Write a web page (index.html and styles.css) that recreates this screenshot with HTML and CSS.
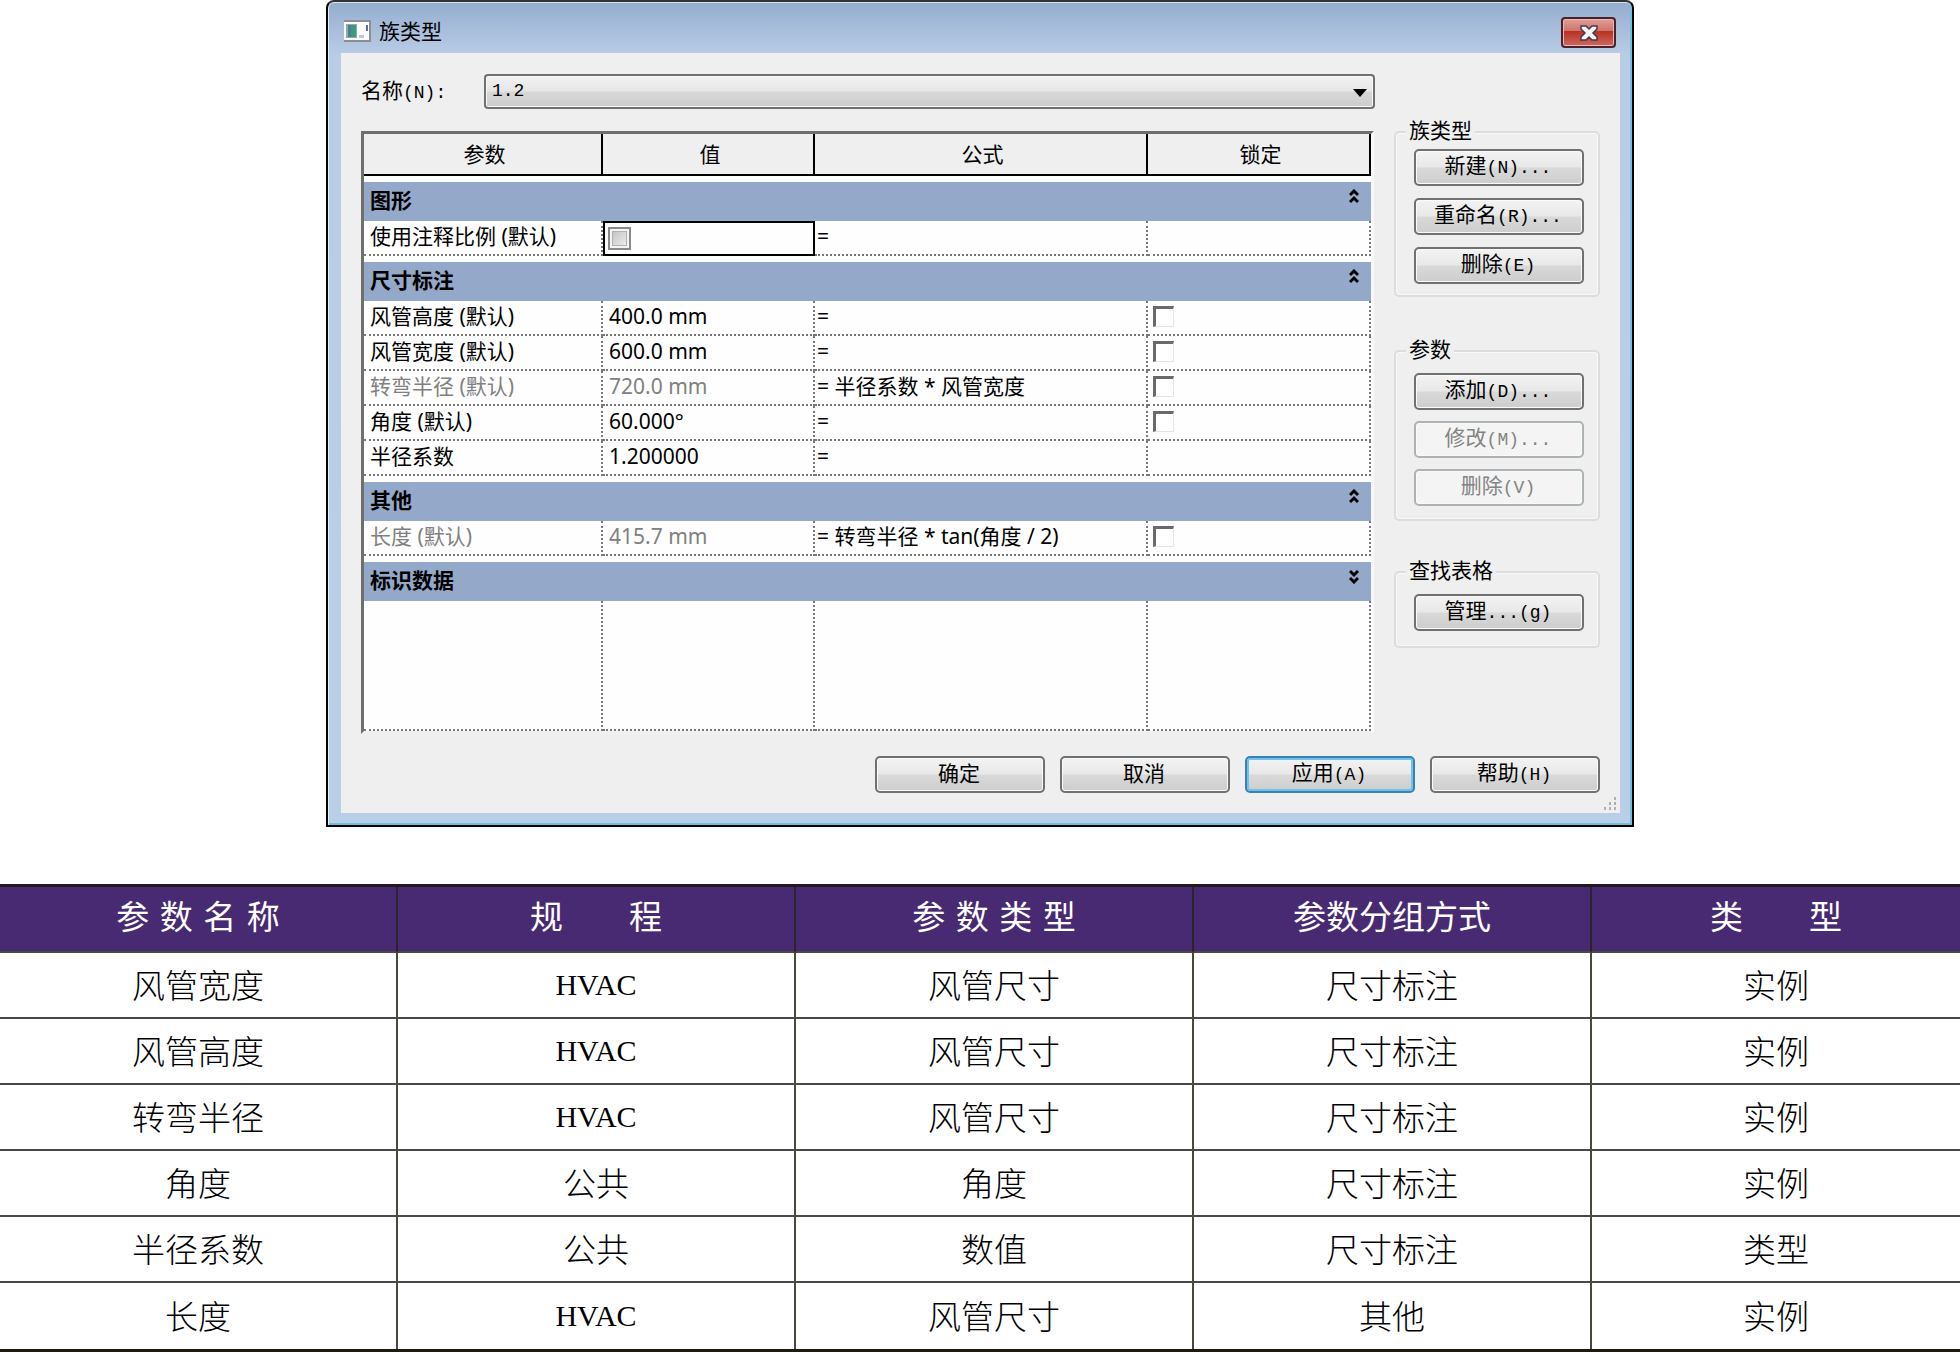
FILE: index.html
```html
<!DOCTYPE html>
<html lang="zh-CN">
<head>
<meta charset="utf-8">
<title>族类型</title>
<link rel="stylesheet" href="styles.css">
</head>
<body>
<section class="dialog" role="dialog" aria-labelledby="dialog-title">
  <header class="titlebar">
    <svg class="app-icon" width="27" height="22" viewBox="0 0 27 22" aria-hidden="true">
      <rect x="0" y="0" width="27" height="22" fill="#8a8f96"/>
      <rect x="0" y="2" width="25" height="18" fill="#fbfbfb"/>
      <rect x="2" y="4" width="11" height="14" fill="#8fa9bb"/>
      <rect x="4" y="5" width="8" height="12" fill="#3f9a7c"/>
      <rect x="4" y="5" width="3" height="12" fill="#4a7f8f"/>
      <rect x="15" y="15" width="5" height="3" fill="#c9c4cc"/>
      <rect x="22" y="5" width="2" height="6" fill="#5a6f8a"/>
    </svg>
    <h1 id="dialog-title" class="title">族类型</h1>
    <button class="close" type="button" aria-label="关闭">
      <svg width="20" height="16" viewBox="0 0 20 16" aria-hidden="true">
        <path d="M2 1h5l3 3 3-3h5v3l-4 4 4 4v3h-5l-3-3-3 3H2v-3l4-4-4-4z" fill="#f4f4f6" stroke="#4a3a48" stroke-width="1.5"/>
      </svg>
    </button>
  </header>

  <div class="client">
    <div class="name-row">
      <label class="name-label" for="type-name">名称<span class="key">(N):</span></label>
      <div class="combo">
        <select id="type-name" class="combo-box"><option>1.2</option></select>
        <svg class="combo-arrow" width="14" height="8" viewBox="0 0 14 8" aria-hidden="true"><path d="M0 0h14L7 8z" fill="#000"/></svg>
      </div>
    </div>

    <div class="body">
      <div class="grid-frame">
        <table class="params">
          <colgroup><col class="c-name"><col class="c-value"><col class="c-formula"><col class="c-lock"></colgroup>
          <thead>
            <tr><th>参数</th><th>值</th><th>公式</th><th>锁定</th></tr>
          </thead>
          <tbody>
            <tr class="group"><td colspan="4"><div class="bar"><span>图形</span><svg class="chev" width="10" height="15" viewBox="0 0 10 15"><path d="M1 6l4-4 4 4M1 13l4-4 4 4"/></svg></div></td></tr>
            <tr><td><label for="scale">使用注释比例 (默认)</label></td><td class="active"><input id="scale" class="tri" type="checkbox"></td><td class="formula">=</td><td></td></tr>
            <tr class="group"><td colspan="4"><div class="bar"><span>尺寸标注</span><svg class="chev" width="10" height="15" viewBox="0 0 10 15"><path d="M1 6l4-4 4 4M1 13l4-4 4 4"/></svg></div></td></tr>
            <tr><td>风管高度 (默认)</td><td>400.0 mm</td><td class="formula">=</td><td class="lock"><input class="flat" type="checkbox" aria-label="锁定风管高度"></td></tr>
            <tr><td>风管宽度 (默认)</td><td>600.0 mm</td><td class="formula">=</td><td class="lock"><input class="flat" type="checkbox" aria-label="锁定风管宽度"></td></tr>
            <tr><td class="dim">转弯半径 (默认)</td><td class="dim">720.0 mm</td><td class="formula">= 半径系数 * 风管宽度</td><td class="lock"><input class="flat" type="checkbox" aria-label="锁定转弯半径"></td></tr>
            <tr><td>角度 (默认)</td><td>60.000°</td><td class="formula">=</td><td class="lock"><input class="flat" type="checkbox" aria-label="锁定角度"></td></tr>
            <tr><td>半径系数</td><td>1.200000</td><td class="formula">=</td><td></td></tr>
            <tr class="group"><td colspan="4"><div class="bar"><span>其他</span><svg class="chev" width="10" height="15" viewBox="0 0 10 15"><path d="M1 6l4-4 4 4M1 13l4-4 4 4"/></svg></div></td></tr>
            <tr><td class="dim">长度 (默认)</td><td class="dim">415.7 mm</td><td class="formula">= 转弯半径 * tan(角度 / 2)</td><td class="lock"><input class="flat" type="checkbox" aria-label="锁定长度"></td></tr>
            <tr class="group"><td colspan="4"><div class="bar"><span>标识数据</span><svg class="chev" width="10" height="15" viewBox="0 0 10 15"><path d="M1 2l4 4 4-4M1 9l4 4 4-4"/></svg></div></td></tr>
            <tr class="filler"><td></td><td></td><td></td><td></td></tr>
          </tbody>
        </table>
      </div>

      <aside class="side">
        <fieldset class="box types">
          <legend>族类型</legend>
          <button class="btn" type="button">新建<span class="key">(N)...</span></button>
          <button class="btn" type="button">重命名<span class="key">(R)...</span></button>
          <button class="btn" type="button">删除<span class="key">(E)</span></button>
        </fieldset>
        <fieldset class="box fields">
          <legend>参数</legend>
          <button class="btn" type="button">添加<span class="key">(D)...</span></button>
          <button class="btn" type="button" disabled>修改<span class="key">(M)...</span></button>
          <button class="btn" type="button" disabled>删除<span class="key">(V)</span></button>
        </fieldset>
        <fieldset class="box lookup">
          <legend>查找表格</legend>
          <button class="btn" type="button">管理<span class="key">...(g)</span></button>
        </fieldset>
      </aside>
    </div>

    <footer class="actions">
      <button class="btn" type="button">确定</button>
      <button class="btn" type="button">取消</button>
      <button class="btn default" type="button">应用<span class="key">(A)</span></button>
      <button class="btn" type="button">帮助<span class="key">(H)</span></button>
    </footer>
    <svg class="grip" width="14" height="14" viewBox="0 0 14 14" aria-hidden="true">
      <path d="M11 0h2v3h-2zM6 5h2v3H6zM11 5h2v3h-2zM1 10h2v3H1zM6 10h2v3H6zM11 10h2v3h-2z" fill="#b0b0b0"/>
    </svg>
  </div>
</section>

<table class="spec">
  <colgroup><col><col><col><col><col class="last"></colgroup>
  <thead>
    <tr><th>参 数 名 称</th><th>规　　程</th><th>参 数 类 型</th><th>参数分组方式</th><th>类　　型</th></tr>
  </thead>
  <tbody>
    <tr><td>风管宽度</td><td class="latin">HVAC</td><td>风管尺寸</td><td>尺寸标注</td><td>实例</td></tr>
    <tr><td>风管高度</td><td class="latin">HVAC</td><td>风管尺寸</td><td>尺寸标注</td><td>实例</td></tr>
    <tr><td>转弯半径</td><td class="latin">HVAC</td><td>风管尺寸</td><td>尺寸标注</td><td>实例</td></tr>
    <tr><td>角度</td><td>公共</td><td>角度</td><td>尺寸标注</td><td>实例</td></tr>
    <tr><td>半径系数</td><td>公共</td><td>数值</td><td>尺寸标注</td><td>类型</td></tr>
    <tr><td>长度</td><td class="latin">HVAC</td><td>风管尺寸</td><td>其他</td><td>实例</td></tr>
  </tbody>
</table>
</body>
</html>
```

FILE: styles.css
```css
* { box-sizing: border-box; }

body {
  margin: 0;
  background: #fff;
  color: #000;
  font-family: "Noto Sans", "Noto Sans CJK SC", sans-serif;
  font-size: 21px;
  line-height: 28px;
}

button, select, input { font: inherit; color: inherit; margin: 0; }

/* dialog window */
.dialog {
  max-width: 1308px;
  margin: 0 auto 57px;
  padding: 0 12px 12px 13px;
  border: 2px solid #000;
  border-top-color: #333;
  border-radius: 8px 8px 0 0;
  background: linear-gradient(#94adcf 0, #b9cce6 52px, #b9cfe8 100%);
  box-shadow: inset 1px 0 #e4f0fa, inset 0 1px #d5e2f2, inset -2px -2px #6cc0dc;
}

.titlebar {
  display: flex;
  align-items: center;
  height: 51px;
  padding: 10px 4px 0;
  gap: 8px;
}

.app-icon { margin-left: -1px; margin-bottom: 4px; }

.title {
  flex: 1;
  margin: 0 0 4px;
  font-size: 21px;
  font-weight: 400;
  line-height: 28px;
}

.close {
  display: flex;
  align-items: center;
  justify-content: center;
  width: 55px;
  height: 31px;
  padding: 0;
  border: 2px solid #4c1f2c;
  border-radius: 4px;
  background: linear-gradient(#dfa09a 0, #cf7169 45%, #b83024 46%, #cc6a60 100%);
  box-shadow: inset 0 0 0 1px #e9b9b4;
}

.client {
  position: relative;
  padding: 20px;
  background: #efefef;
}

.key { font-family: "Liberation Mono", monospace; font-size: 18px; }

/* name row */
.name-row {
  display: flex;
  align-items: center;
  height: 36px;
  margin-right: 225px;
}

.name-label { width: 123px; }

.combo { position: relative; flex: 1; height: 35px; }

.combo-box {
  width: 100%;
  height: 35px;
  padding: 0 6px;
  appearance: none;
  border: 2px solid #707070;
  border-radius: 4px;
  background: linear-gradient(#f2f2f2 0, #e6e6e6 48%, #d8d8d8 52%, #cbcbcb 100%);
  box-shadow: inset 0 0 0 1px #f8f8f8;
  font-family: "Liberation Mono", monospace;
  font-size: 18px;
}

.combo-arrow { position: absolute; right: 8px; top: 15px; pointer-events: none; }

.body { display: flex; gap: 20px; margin-top: 22px; }

/* parameter grid */
.grid-frame {
  flex: 1;
  border: 3px solid #8a8a8a;
  border-top-color: #6f6f6f;
  border-left-color: #6f6f6f;
  border-right-color: #f8f8f8;
  border-bottom-color: #f0f0f0;
  background: #fefefe;
}

.params {
  width: 100%;
  table-layout: fixed;
  border-collapse: separate;
  border-spacing: 0;
}

.c-name { width: 239px; }
.c-value { width: 212px; }
.c-formula { width: 333px; }

.params th {
  height: 42px;
  padding: 0 0 0 4px;
  border-right: 2px solid #000;
  border-bottom: 2px solid #000;
  background: #efefef;
  font-weight: 400;
}

.params td {
  height: 35px;
  padding: 0 6px 4px;
  border-right: 2px dotted #777;
  border-bottom: 2px dotted #777;
  white-space: nowrap;
}

.params .formula { padding-left: 2px; }
.params .dim { color: #808080; }
.params .lock { padding: 0 6px 2px 5px; }

.params .group td {
  height: 45px;
  padding: 0;
  border: 0;
  border-top: 6px solid #fefefe;
}

.bar {
  display: flex;
  justify-content: space-between;
  height: 39px;
  padding: 4px 12px 7px 6px;
  background: #94a9ca;
  font-weight: 700;
}

.chev { fill: none; stroke: #000; stroke-width: 3; margin-top: 3px; }

.params .active {
  padding: 0 3px;
  border: 2px solid #000;
}

.params .filler td { height: 130px; }

.tri, .flat { display: block; appearance: none; }

.tri {
  width: 23px;
  height: 23px;
  border: 2px solid #8a8a8a;
  background: linear-gradient(135deg, #bcbcbc, #f4f4f4);
  box-shadow: inset 0 0 0 2px #f4f4f4, inset 0 0 0 3px #b0b0b0;
}

.flat {
  width: 21px;
  height: 21px;
  border: 1px solid #e4e4e4;
  border-top: 3px solid #6a6a6a;
  border-left: 3px solid #6a6a6a;
  background: #fff;
}

/* button groups */
.side { width: 206px; }

.box {
  display: flex;
  flex-direction: column;
  position: relative;
  min-width: 0;
  margin: 0;
  padding: 16px 14px 14px 18px;
  border: 2px solid #dadddf;
  border-radius: 5px;
  box-shadow: inset 0 0 0 1px #f8f8f8;
}

.box legend {
  position: absolute;
  top: -17px;
  left: 10px;
  padding: 0 3px;
  background: #efefef;
}

.types { height: 166px; gap: 12px; }
.fields { height: 171px; margin-top: 53px; padding-top: 21px; gap: 11px; }
.lookup { height: 77px; margin-top: 50px; padding-top: 21px; }

.btn {
  width: 170px;
  height: 37px;
  padding: 0 2px 3px 0;
  border: 2px solid #707070;
  border-radius: 5px;
  background: linear-gradient(#f3f3f3 0, #e8e8e8 48%, #d9d9d9 52%, #cdcdcd 100%);
  box-shadow: inset 0 0 0 1px #fafafa;
  line-height: 28px;
  text-align: center;
  white-space: nowrap;
}

.btn:disabled {
  border-color: #adb2b5;
  background: #f4f4f4;
  color: #838383;
}

.btn.default {
  border-color: #3c7fb1;
  box-shadow: inset 0 0 0 2px #6cc4ec;
}

.actions { display: flex; justify-content: flex-end; gap: 15px; margin-top: 22px; }

.grip { position: absolute; right: 3px; bottom: 2px; }

/* specification table */
.spec {
  width: 100%;
  table-layout: fixed;
  border-collapse: separate;
  border-spacing: 0;
  border-top: 3px solid #1e1a20;
  border-bottom: 3px solid #1e1a10;
  font-family: "Noto Sans CJK SC", sans-serif;
  font-size: 33px;
  line-height: 40px;
}

.spec .last { width: 368px; }

.spec th, .spec td {
  height: 66px;
  padding: 0 0 2px;
  border-right: 2px solid #4a4a3c;
  border-bottom: 2px solid #4a4a44;
  text-align: center;
  font-weight: 300;
}

.spec th {
  background: #482a72;
  border-right-color: #2b2430;
  color: #fff;
  font-family: "DejaVu Sans", "Noto Sans CJK SC", sans-serif;
  font-weight: 400;
}

.spec tr > :last-child { border-right: 0; }
.spec tbody tr:last-child td { border-bottom: 0; }

.spec .latin { padding: 0; font-family: "Liberation Serif", serif; font-size: 30px; }
```
